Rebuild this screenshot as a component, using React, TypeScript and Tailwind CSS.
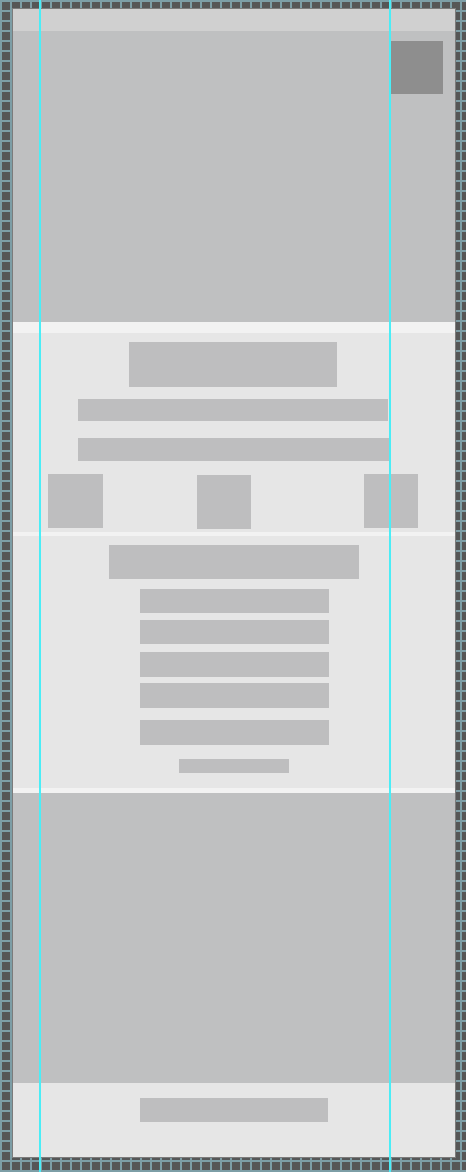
export default function App() {
  return (
    <div className="relative min-h-[1172px] w-full bg-[#565656] bg-[linear-gradient(to_right,#7d9ea6_2px,transparent_2px),linear-gradient(to_bottom,#7d9ea6_2px,transparent_2px)] bg-[size:10px_10px] pt-[9px] pl-[13px] pr-[11px] pb-[15px]">
      <div className="flex flex-col shadow-[0_0_0_1px_#7c7c7c]">
        {/* header bar */}
        <div className="h-[22px] bg-[#d0d0d0]" />

        {/* hero */}
        <div className="flex h-[291px] justify-end bg-[#bfc0c1] pt-[10px] pr-[12px]">
          <div className="h-[53px] w-[53px] bg-[#8e8e8e]" />
        </div>

        <div className="h-[11px] bg-[#f2f2f2]" />

        {/* section 2 */}
        <div className="flex h-[199px] flex-col items-center bg-[#e6e6e6] pt-[9px] pr-[2px]">
          <div className="h-[45px] w-[208px] bg-[#bebebf]" />
          <div className="mt-[12px] h-[22px] w-[310px] bg-[#bebebf]" />
          <div className="mt-[17px] h-[23px] w-[311px] bg-[#bebebf]" />
          <div className="mt-[13px] flex w-full pl-[35px]">
            <div className="h-[54px] w-[55px] bg-[#bebebf]" />
            <div className="ml-[94px] mt-px h-[54px] w-[54px] bg-[#bebebf]" />
            <div className="ml-[113px] h-[54px] w-[54px] bg-[#bebebf]" />
          </div>
        </div>

        <div className="h-[4px] bg-[#f2f2f2]" />

        {/* section 3 */}
        <div className="flex h-[252px] flex-col items-center bg-[#e6e6e6] pt-[9px]">
          <div className="h-[34px] w-[250px] bg-[#bebebf]" />
          <div className="mt-[10px] h-[24px] w-[189px] bg-[#bebebf]" />
          <div className="mt-[7px] h-[24px] w-[189px] bg-[#bebebf]" />
          <div className="mt-[8px] h-[25px] w-[189px] bg-[#bebebf]" />
          <div className="mt-[6px] h-[25px] w-[189px] bg-[#bebebf]" />
          <div className="mt-[12px] h-[25px] w-[189px] bg-[#bebebf]" />
          <div className="mt-[14px] h-[14px] w-[110px] bg-[#bebebf]" />
        </div>

        <div className="h-[5px] bg-[#f2f2f2]" />

        {/* section 4 */}
        <div className="h-[290px] bg-[#bfc0c1]" />

        {/* footer */}
        <div className="flex h-[74px] justify-center bg-[#e6e6e6] pt-[15px]">
          <div className="h-[24px] w-[188px] bg-[#bebebf]" />
        </div>
      </div>

      {/* guide lines */}
      <div className="pointer-events-none absolute top-0 bottom-0 left-[39px] w-[2px] bg-[#4aeef7]" />
      <div className="pointer-events-none absolute top-0 bottom-0 left-[389px] w-[2px] bg-[#4aeef7]" />
    </div>
  );
}
